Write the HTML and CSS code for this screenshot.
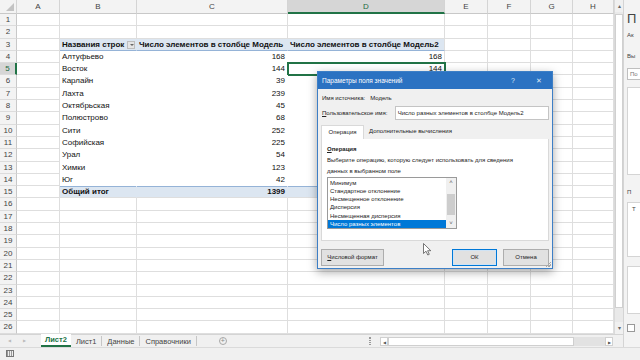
FILE: index.html
```html
<!DOCTYPE html>
<html lang="ru">
<head>
  <meta charset="UTF-8">
  <title>Книга1 - Excel</title>
  <link rel="stylesheet" href="styles.css">
</head>
<body>
<div class="app">
  <div class="main">
    <div class="workarea">
      <div class="sheet-wrap">
        <div class="sheet">
          <!-- column headers -->
          <div class="corner"><span class="tri"></span></div><div class="ch">A</div><div class="ch">B</div><div class="ch">C</div><div class="ch sel">D</div><div class="ch">E</div><div class="ch">F</div><div class="ch">G</div><div class="ch">H</div>
          <!-- rows -->
          <div class="rh">1</div><div class="c"></div><div class="c"></div><div class="c"></div><div class="c"></div><div class="c"></div><div class="c"></div><div class="c"></div><div class="c"></div>
          <div class="rh">2</div><div class="c"></div><div class="c"></div><div class="c"></div><div class="c"></div><div class="c"></div><div class="c"></div><div class="c"></div><div class="c"></div>
          <div class="rh">3</div><div class="c"></div><div class="c pv-head">Названия строк <span class="filter"></span></div><div class="c pv-head">Число элементов в столбце Модель</div><div class="c pv-head last">Число элементов в столбце Модель2</div><div class="c"></div><div class="c"></div><div class="c"></div><div class="c"></div>
          <div class="rh">4</div><div class="c"></div><div class="c pv">Алтуфьево</div><div class="c pv num">168</div><div class="c pv num last">168</div><div class="c"></div><div class="c"></div><div class="c"></div><div class="c"></div>
          <div class="rh sel">5</div><div class="c"></div><div class="c pv">Восток</div><div class="c pv num">144</div><div class="c pv num last cur-cell">144</div><div class="c"></div><div class="c"></div><div class="c"></div><div class="c"></div>
          <div class="rh">6</div><div class="c"></div><div class="c pv">Карлайн</div><div class="c pv num">39</div><div class="c pv last"></div><div class="c"></div><div class="c"></div><div class="c"></div><div class="c"></div>
          <div class="rh">7</div><div class="c"></div><div class="c pv">Лахта</div><div class="c pv num">239</div><div class="c pv last"></div><div class="c"></div><div class="c"></div><div class="c"></div><div class="c"></div>
          <div class="rh">8</div><div class="c"></div><div class="c pv">Октябрьская</div><div class="c pv num">45</div><div class="c pv last"></div><div class="c"></div><div class="c"></div><div class="c"></div><div class="c"></div>
          <div class="rh">9</div><div class="c"></div><div class="c pv">Полюстрово</div><div class="c pv num">68</div><div class="c pv last"></div><div class="c"></div><div class="c"></div><div class="c"></div><div class="c"></div>
          <div class="rh">10</div><div class="c"></div><div class="c pv">Сити</div><div class="c pv num">252</div><div class="c pv last"></div><div class="c"></div><div class="c"></div><div class="c"></div><div class="c"></div>
          <div class="rh">11</div><div class="c"></div><div class="c pv">Софийская</div><div class="c pv num">225</div><div class="c pv last"></div><div class="c"></div><div class="c"></div><div class="c"></div><div class="c"></div>
          <div class="rh">12</div><div class="c"></div><div class="c pv">Урал</div><div class="c pv num">54</div><div class="c pv last"></div><div class="c"></div><div class="c"></div><div class="c"></div><div class="c"></div>
          <div class="rh">13</div><div class="c"></div><div class="c pv">Химки</div><div class="c pv num">123</div><div class="c pv last"></div><div class="c"></div><div class="c"></div><div class="c"></div><div class="c"></div>
          <div class="rh">14</div><div class="c"></div><div class="c pv">Юг</div><div class="c pv num">42</div><div class="c pv last"></div><div class="c"></div><div class="c"></div><div class="c"></div><div class="c"></div>
          <div class="rh">15</div><div class="c"></div><div class="c pv-total">Общий итог</div><div class="c pv-total num">1399</div><div class="c pv-total last"></div><div class="c"></div><div class="c"></div><div class="c"></div><div class="c"></div>
          <div class="rh">16</div><div class="c"></div><div class="c"></div><div class="c"></div><div class="c"></div><div class="c"></div><div class="c"></div><div class="c"></div><div class="c"></div>
          <div class="rh">17</div><div class="c"></div><div class="c"></div><div class="c"></div><div class="c"></div><div class="c"></div><div class="c"></div><div class="c"></div><div class="c"></div>
          <div class="rh">18</div><div class="c"></div><div class="c"></div><div class="c"></div><div class="c"></div><div class="c"></div><div class="c"></div><div class="c"></div><div class="c"></div>
          <div class="rh">19</div><div class="c"></div><div class="c"></div><div class="c"></div><div class="c"></div><div class="c"></div><div class="c"></div><div class="c"></div><div class="c"></div>
          <div class="rh">20</div><div class="c"></div><div class="c"></div><div class="c"></div><div class="c"></div><div class="c"></div><div class="c"></div><div class="c"></div><div class="c"></div>
          <div class="rh">21</div><div class="c"></div><div class="c"></div><div class="c"></div><div class="c"></div><div class="c"></div><div class="c"></div><div class="c"></div><div class="c"></div>
          <div class="rh">22</div><div class="c"></div><div class="c"></div><div class="c"></div><div class="c"></div><div class="c"></div><div class="c"></div><div class="c"></div><div class="c"></div>
          <div class="rh">23</div><div class="c"></div><div class="c"></div><div class="c"></div><div class="c"></div><div class="c"></div><div class="c"></div><div class="c"></div><div class="c"></div>
          <div class="rh">24</div><div class="c"></div><div class="c"></div><div class="c"></div><div class="c"></div><div class="c"></div><div class="c"></div><div class="c"></div><div class="c"></div>
          <div class="rh">25</div><div class="c"></div><div class="c"></div><div class="c"></div><div class="c"></div><div class="c"></div><div class="c"></div><div class="c"></div><div class="c"></div>
          <div class="rh">26</div><div class="c"></div><div class="c"></div><div class="c"></div><div class="c"></div><div class="c"></div><div class="c"></div><div class="c"></div><div class="c"></div>
        </div>
        <div class="vscroll">
          <div class="arrow">&#9652;</div>
          <div class="vtrack"><div class="vthumb"></div></div>
          <div class="arrow">&#9662;</div>
        </div>
      </div>
      <div class="tabbar">
        <span class="nav">&#9664;</span>
        <span class="nav">&#9654;</span>
        <span class="tab current">Лист2</span>
        <span class="tab">Лист1</span>
        <span class="tab">Данные</span>
        <span class="tab">Справочники</span>
        <span class="add-sheet">+</span>
        <div class="hscroll">
          <span class="grip"></span>
          <span class="harrow">&#9664;</span>
          <span class="hthumb"></span>
          <span class="htrack"></span>
          <span class="harrow">&#9654;</span>
        </div>
      </div>
    </div>
    <div class="pane">
      <div class="pane-title">П</div>
      <div class="pane-small">Ак</div>
      <div class="pane-small gap">Вы</div>
      <div class="pane-input">По</div>
      <div class="pane-box tall"></div>
      <div class="pane-small gap">П</div>
      <div class="pane-box mid">Т</div>
      <div class="pane-box mid2"></div>
      <div class="pane-check"></div>
    </div>
  </div>
  <div class="status"><span class="status-icon"></span></div>

  <div class="dialog">
    <div class="dlg-title">
      <span class="dlg-caption">Параметры поля значений</span>
      <span class="dlg-ctl">?</span>
      <span class="dlg-ctl">&#10005;</span>
    </div>
    <div class="dlg-body">
      <div class="src-line">Имя источника:&nbsp;&nbsp; Модель</div>
      <div class="name-row">
        <span class="name-label"><u>П</u>ользовательское имя:</span>
        <span class="name-input">Число разных элементов в столбце Модель2</span>
      </div>
      <div class="dlg-tabs">
        <span class="dlg-tab current">Операция</span>
        <span class="dlg-tab">Дополнительные вычисления</span>
      </div>
      <div class="dlg-panel">
        <div class="group-title"><u>О</u>перация</div>
        <div class="group-desc">Выберите операцию, которую следует использовать для сведения<br>данных в выбранном поле</div>
        <div class="listbox">
          <div class="items">
            <div class="item">Минимум</div>
            <div class="item">Стандартное отклонение</div>
            <div class="item">Несмещенное отклонение</div>
            <div class="item">Дисперсия</div>
            <div class="item">Несмещенная дисперсия</div>
            <div class="item selected">Число разных элементов</div>
          </div>
          <div class="lb-scroll">
            <span class="lb-arrow">&#708;</span>
            <span class="lb-thumb"></span>
            <span class="lb-arrow">&#709;</span>
          </div>
        </div>
      </div>
      <div class="dlg-buttons">
        <span class="btn wide"><u>Ч</u>исловой формат</span>
        <span class="btn ok">ОК</span>
        <span class="btn">Отмена</span>
      </div>
    </div>
    <span class="grip-corner"></span>
  </div>

  <svg class="cursor" width="9" height="13" viewBox="0 0 9 13">
    <path d="M0.5 0.5 L0.5 10.5 L3 8.2 L4.8 12 L6.3 11.3 L4.6 7.7 L7.8 7.7 Z" fill="#fff" stroke="#555" stroke-width="0.8"/>
  </svg>
</div>
</body>
</html>
```

FILE: styles.css
```css
* {
  box-sizing: border-box;
}

body {
  margin: 0;
  background: #fff;
  font-family: 'Liberation Sans', Arial, sans-serif;
  color: #222;
}

.app {
  position: relative;
  width: 640px;
  height: 360px;
  overflow: hidden;
}

.main {
  display: flex;
  height: 347px;
}

.workarea {
  width: 623px;
  display: flex;
  flex-direction: column;
}

.sheet-wrap {
  display: flex;
  height: 334px;
}

/* Spreadsheet grid */
.sheet {
  width: 614px;
  display: grid;
  grid-template-columns: 17px 43px 77px 151px 157px 43px 43px 42px 41px;
  grid-template-rows: 14px repeat(26, 12.3px);
  font-size: 8px;
  overflow: hidden;
}

.corner {
  position: relative;
  background: #f3f3f3;
  border-right: 1px solid #d4d4d4;
  border-bottom: 1px solid #c8c8c8;
}

.tri {
  position: absolute;
  right: 2px;
  bottom: 2px;
  border-left: 8px solid transparent;
  border-bottom: 8px solid #c3c3c3;
}

.ch {
  background: #f3f3f3;
  color: #444;
  text-align: center;
  line-height: 13px;
  border-right: 1px solid #d4d4d4;
  border-bottom: 1px solid #c8c8c8;
}

.ch.sel {
  background: #d6d6d6;
  color: #1d6a3f;
  border-bottom: 2px solid #217346;
}

.rh {
  background: #f3f3f3;
  color: #444;
  text-align: center;
  line-height: 12px;
  border-right: 1px solid #c8c8c8;
  border-bottom: 1px solid #dcdcdc;
}

.rh.sel {
  background: #d6d6d6;
  color: #1d6a3f;
  border-right: 2px solid #217346;
}

.c {
  border-right: 1px solid #dedede;
  border-bottom: 1px solid #dedede;
  padding: 0 2px;
  line-height: 12px;
  white-space: nowrap;
  color: #111;
}

.num {
  text-align: right;
}

/* Pivot table */
.pv {
  border-right-color: #fff;
  border-bottom-color: #fff;
}

.pv-head {
  background: #dce6f1;
  font-weight: bold;
  border-right-color: #dce6f1;
  border-bottom-color: #95b3d7;
  position: relative;
}

.pv-total {
  background: #dce6f1;
  font-weight: bold;
  border-right-color: #dce6f1;
  border-bottom-color: #dedede;
  box-shadow: inset 0 1px #95b3d7;
}

.c.last {
  border-right-color: #dedede;
}

.filter {
  position: absolute;
  right: 1px;
  top: 2px;
  width: 8px;
  height: 8px;
  background: #e4e4e4;
  border: 1px solid #bdbdbd;
}

.filter::after {
  content: "";
  position: absolute;
  left: 1.5px;
  top: 2px;
  border-left: 2px solid transparent;
  border-right: 2px solid transparent;
  border-top: 2px solid #666;
}

.cur-cell {
  outline: 2px solid #217346;
  outline-offset: -1px;
}

/* Vertical scrollbar */
.vscroll {
  width: 9px;
  background: #e9e9e9;
  display: flex;
  flex-direction: column;
  border-left: 1px solid #dadada;
}

.arrow {
  height: 12px;
  font-size: 6px;
  color: #666;
  text-align: center;
  line-height: 12px;
  background: #f0f0f0;
}

.vtrack {
  flex: 1;
  padding: 2px 0 14px;
}

.vthumb {
  height: 100%;
  background: #fff;
  border: 1px solid #d0d0d0;
}

/* Sheet tabs */
.tabbar {
  height: 13px;
  background: #f0f0f0;
  border-top: 1px solid #d4d4d4;
  display: flex;
  align-items: stretch;
  font-size: 7.5px;
  color: #444;
}

.nav {
  width: 15px;
  text-align: center;
  font-size: 4px;
  line-height: 12px;
  color: #bbb;
  margin-left: 2px;
}

.nav + .nav {
  margin-left: 0;
  margin-right: 9px;
}

.tab {
  padding: 0 5px;
  line-height: 11px;
  border-right: 1px solid #c6c6c6;
  margin: 1px 0;
}

.tab.current {
  background: #fff;
  color: #217346;
  font-weight: bold;
  border-right: none;
  border-bottom: 2px solid #217346;
  margin: -1px 0 0;
  line-height: 12px;
  padding: 0 4px;
}

.add-sheet {
  width: 8px;
  height: 8px;
  margin: 2px 0 0 22px;
  border: 1px solid #a8a8a8;
  border-radius: 50%;
  font-size: 7px;
  line-height: 6px;
  text-align: center;
  color: #888;
}

.hscroll {
  margin-left: auto;
  margin-right: 10px;
  display: flex;
  align-items: center;
}

.grip {
  width: 2px;
  height: 8px;
  margin-right: 9px;
  border-left: 1px dotted #999;
  border-right: 1px dotted #999;
}

.harrow {
  width: 8px;
  height: 9px;
  font-size: 4px;
  line-height: 9px;
  text-align: center;
  color: #555;
  background: #fff;
  border: 1px solid #d0d0d0;
}

.hthumb {
  width: 186px;
  height: 9px;
  background: #fff;
  border: 1px solid #cfcfcf;
}

.htrack {
  width: 31px;
  height: 9px;
  background: #e2e2e2;
}

/* Field list pane (cut off at right edge) */
.pane {
  width: 17px;
  background: #f3f3f3;
  border-left: 1px solid #d4d4d4;
  padding: 0 0 0 3px;
  overflow: hidden;
  font-size: 6px;
  color: #444;
  white-space: nowrap;
}

.pane-title {
  font-size: 13px;
  line-height: 15px;
  margin-top: 11px;
  color: #444;
}

.pane-small {
  margin-top: 5px;
  line-height: 8px;
}

.pane-small.gap {
  margin-top: 13px;
}

.pane-input {
  margin-top: 8px;
  height: 12px;
  line-height: 10px;
  background: #fff;
  border: 1px solid #bfbfbf;
  border-right: none;
  padding-left: 2px;
  color: #777;
}

.pane-box {
  margin-top: 7px;
  background: #fff;
  border: 1px solid #d4d4d4;
  border-right: none;
  padding: 3px 0 0 4px;
}

.pane-box.tall {
  height: 88px;
}

.pane-box.mid {
  height: 55px;
  margin-top: 6px;
}

.pane-box.mid2 {
  height: 48px;
  margin-top: 9px;
}

.pane-check {
  margin-top: 10px;
  width: 8px;
  height: 8px;
  background: #fff;
  border: 1px solid #999;
}

/* Status bar */
.status {
  height: 13px;
  background: #f0f0f0;
  border-top: 1px solid #dadada;
  padding: 2px 0 0 6px;
}

.status-icon {
  display: block;
  width: 8px;
  height: 7px;
  border: 1px solid #777;
  background: repeating-linear-gradient(90deg, #999 0 1px, #eee 1px 2px);
}

/* Value Field Settings dialog */
.dialog {
  position: absolute;
  left: 317px;
  top: 71px;
  width: 236px;
  height: 198px;
  background: #f0f0f0;
  border: 1px solid #3d7fc6;
  box-shadow: 0 3px 9px rgba(0, 0, 0, 0.35);
  font-size: 6px;
  color: #222;
}

.dlg-title {
  height: 17px;
  background: #2b72c2;
  color: #fff;
  display: flex;
  align-items: center;
  padding-left: 4px;
  font-size: 6.5px;
}

.dlg-caption {
  flex: 1;
}

.dlg-ctl {
  width: 26px;
  text-align: center;
  font-size: 7px;
  color: #dce8f6;
}

.dlg-body {
  padding: 0 3px;
}

.src-line {
  margin-top: 5px;
  line-height: 8px;
  padding-left: 1px;
}

.name-row {
  display: flex;
  align-items: center;
  margin-top: 4px;
  padding-left: 1px;
}

.name-label {
  width: 73px;
}

.name-input {
  width: 155px;
  height: 14px;
  line-height: 12px;
  background: #fff;
  border: 1px solid #c4c4c4;
  padding-left: 2px;
}

.dlg-tabs {
  display: flex;
  margin-top: 5px;
  height: 14px;
}

.dlg-tab {
  line-height: 13px;
  padding: 0 5px;
}

.dlg-tab.current {
  background: #fff;
  border: 1px solid #d9d9d9;
  border-bottom: none;
  width: 43px;
  text-align: center;
  padding: 0;
}

.dlg-panel {
  width: 228px;
  height: 102px;
  background: #fff;
  border: 1px solid #d9d9d9;
  border-top: none;
  padding: 6px 5px 0;
}

.group-title {
  font-weight: bold;
  line-height: 9px;
}

.group-desc {
  margin-top: 1px;
  line-height: 11px;
}

.listbox {
  display: flex;
  width: 130px;
  height: 52px;
  border: 1px solid #9a9a9a;
}

.items {
  flex: 1;
  padding-top: 0.5px;
}

.item {
  height: 8.3px;
  line-height: 8.3px;
  padding-left: 2px;
  white-space: nowrap;
}

.item.selected {
  background: #0078d7;
  color: #fff;
}

.lb-scroll {
  width: 10px;
  display: flex;
  flex-direction: column;
  background: #f0f0f0;
}

.lb-arrow {
  height: 9px;
  font-size: 6px;
  line-height: 9px;
  text-align: center;
  color: #555;
}

.lb-thumb {
  flex: 1;
  margin: 7px 1px 4px;
  background: #cdcdcd;
}

.dlg-buttons {
  display: flex;
  gap: 6px;
  margin-top: 8px;
}

.btn {
  width: 46px;
  height: 17px;
  line-height: 15px;
  text-align: center;
  background: #e1e1e1;
  border: 1px solid #adadad;
}

.btn.wide {
  width: 63px;
  margin-right: auto;
}

.btn.ok {
  width: 45px;
  border: 1px solid #0078d7;
  box-shadow: inset 0 0 0 1px #cfe3f5;
}

.grip-corner {
  position: absolute;
  right: 1px;
  bottom: 1px;
  width: 6px;
  height: 6px;
  background: linear-gradient(135deg, transparent 55%, #a8a8a8 55% 65%, transparent 65% 75%, #a8a8a8 75% 85%, transparent 85%);
}

.cursor {
  position: absolute;
  left: 423px;
  top: 243px;
}
```
